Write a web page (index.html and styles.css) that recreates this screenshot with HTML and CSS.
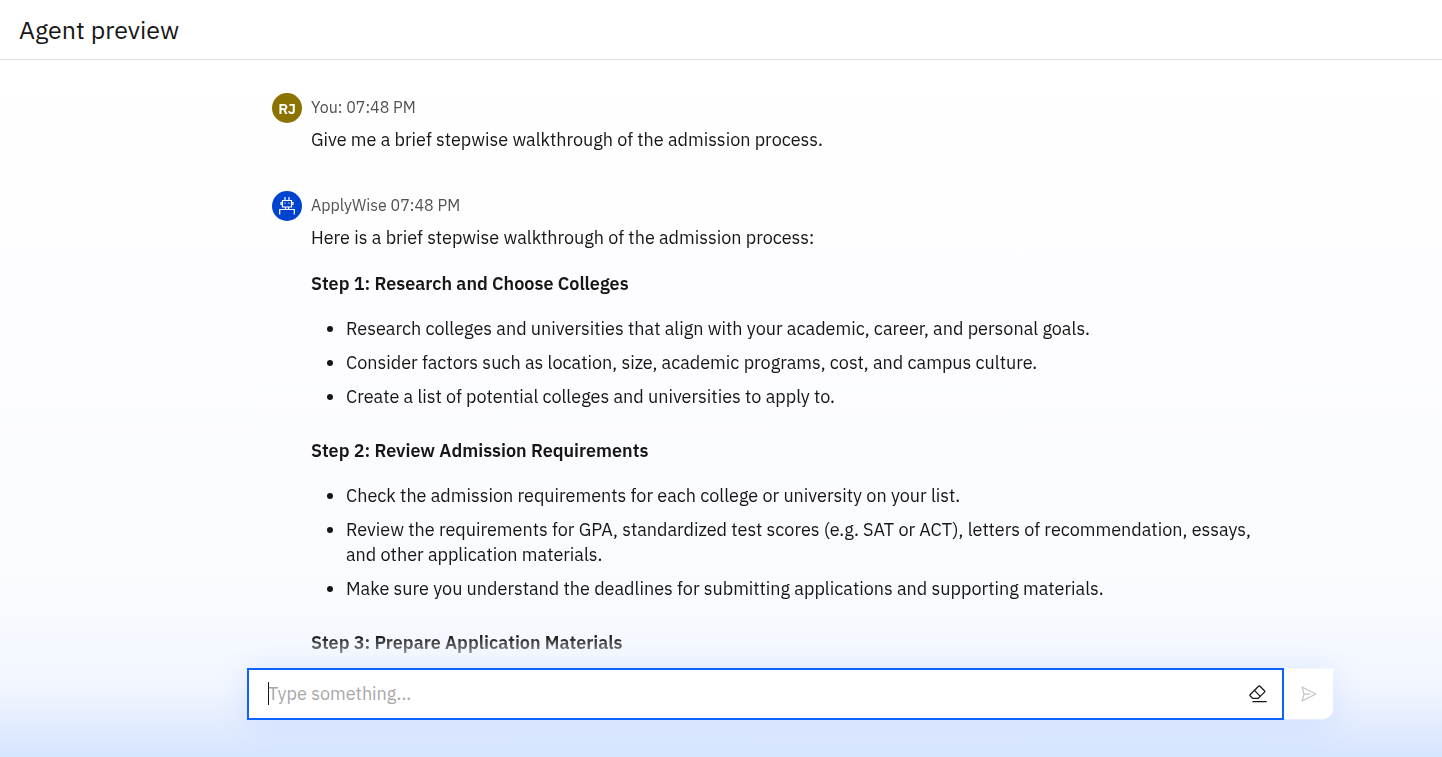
FILE: index.html
```html
<!DOCTYPE html>
<html lang="en">
<head>
<meta charset="utf-8">
<meta name="viewport" content="width=device-width, initial-scale=1">
<title>Agent preview</title>
<link rel="stylesheet" href="styles.css">
</head>
<body>
<header class="header"><h1 class="title">Agent preview</h1></header>
<main class="chat">
  <div class="messages">
    <article class="message">
      <div class="avatar avatar-user">RJ</div>
      <div class="body">
        <div class="meta">You: 07:48 PM</div>
        <p>Give me a brief stepwise walkthrough of the admission process.</p>
      </div>
    </article>
    <article class="message">
      <div class="avatar avatar-agent">
        <svg width="20" height="20" viewBox="0 0 20 20" fill="none" stroke="currentColor" stroke-width="1.2" aria-hidden="true">
          <path d="M8 1v3M12 1v3M5.500 4.500h9v6.500h-9zM5.500 6.500h-1.500v2h1.500M14.500 6.500h1.500v2h-1.500M8.500 11v2.500M11.500 11v2.500M2.700 18.500v-5h14.600v5"/>
          <path d="M7.500 7h1.200M11.300 7h1.200" stroke-width="1.200"/>
        </svg>
      </div>
      <div class="body">
        <div class="meta">ApplyWise 07:48 PM</div>
        <p>Here is a brief stepwise walkthrough of the admission process:</p>
        <h2>Step 1: Research and Choose Colleges</h2>
        <ul>
          <li>Research colleges and universities that align with your academic, career, and personal goals.</li>
          <li>Consider factors such as location, size, academic programs, cost, and campus culture.</li>
          <li>Create a list of potential colleges and universities to apply to.</li>
        </ul>
        <h2>Step 2: Review Admission Requirements</h2>
        <ul>
          <li>Check the admission requirements for each college or university on your list.</li>
          <li>Review the requirements for GPA, standardized test scores (e.g. SAT or ACT), letters of recommendation, essays, and other application materials.</li>
          <li>Make sure you understand the deadlines for submitting applications and supporting materials.</li>
        </ul>
        <h2>Step 3: Prepare Application Materials</h2>
      </div>
    </article>
  </div>
  <form class="composer">
    <div class="field">
      <input class="input" type="text" placeholder="Type something..." aria-label="Message" autocomplete="off" autofocus>
      <span class="caret" aria-hidden="true"></span>
      <button class="icon-button" type="button" aria-label="Clear conversation">
        <svg width="20" height="20" viewBox="0 0 32 32" fill="currentColor" aria-hidden="true">
          <path d="M7 27h23v2H7zM27.380 10.510 19.450 2.590a2 2 0 0 0-2.830 0l-14 14a2 2 0 0 0 0 2.830L7.130 24h9.590l10.660-10.660a2 2 0 0 0 0-2.830zM15.890 22H8l-4-4 6.310-6.310 7.930 7.920zm3.760-3.760-7.920-7.930L18 4l8 7.930z"/>
        </svg>
      </button>
    </div>
    <button class="send" type="submit" aria-label="Send" disabled>
      <svg width="20" height="20" viewBox="0 0 32 32" fill="currentColor" aria-hidden="true">
        <path d="m27.450 15.110-22-11a1 1 0 0 0-1.080.120 1 1 0 0 0-.330 1L7 16 4 26.740A1 1 0 0 0 5 28a1 1 0 0 0 .450-.110l22-11a1 1 0 0 0 0-1.780zm-20.900 10L8.760 17H18v-2H8.760L6.550 6.890 24.760 16z"/>
      </svg>
    </button>
  </form>
</main>
</body>
</html>
```

FILE: styles.css
```css
* { box-sizing: border-box; }

body {
  margin: 0;
  height: 100vh;
  display: flex;
  flex-direction: column;
  overflow: hidden;
  color: #161616;
  font: 18px/25px "IBM Plex Sans", "Noto Sans", sans-serif;
  background: linear-gradient(#ffffff 8%, #fafbff 76%, #f7fbff 81%, #f1f5ff 91%, #d6e4ff 100%);
}

.header {
  flex: none;
  padding: 14px 19px;
  border-bottom: 1px solid #e0e0e0;
  background: #ffffff;
}

.title {
  margin: 0;
  font-size: 25px;
  font-weight: 400;
  line-height: 31px;
}

.chat {
  flex: 1;
  min-height: 0;
  display: flex;
  flex-direction: column;
  padding: 0 109px 37px 247px;
}

.messages {
  flex: 1;
  min-height: 0;
  overflow: hidden;
  display: flex;
  flex-direction: column;
  gap: 39px;
  padding: 33px 72px 0 25px;
  mask-image: linear-gradient(to bottom, #000 calc(100% - 32px), transparent);
}

.message {
  display: flex;
  gap: 9px;
}

.avatar {
  flex: none;
  width: 30px;
  height: 30px;
  border-radius: 50%;
  display: flex;
  align-items: center;
  justify-content: center;
  color: #ffffff;
  font-size: 15px;
  font-weight: 600;
}

.avatar-user { background: #8a7300; }
.avatar-agent { background: #0043ce; }

.body {
  flex: 1;
  min-width: 0;
}

.meta {
  height: 34px;
  color: #525252;
  font-size: 16px;
  line-height: 29px;
}

.body p { margin: 0 0 21px; }

.message:first-child p { margin: 0; }

.body h2 {
  margin: 0 0 20px;
  font-size: 18px;
  font-weight: 600;
}

.body ul {
  margin: 0 0 29px;
  padding-left: 35px;
  display: flex;
  flex-direction: column;
  gap: 9px;
}

.composer {
  flex: none;
  display: flex;
  align-items: center;
  box-shadow: 0 4px 32px rgba(69, 137, 255, 0.14);
  border-radius: 0 0 12px 12px;
}

.field {
  position: relative;
  flex: 1;
  display: flex;
  align-items: center;
  height: 52px;
  padding: 0 14px 0 19px;
  border: 2px solid #0f62fe;
  background: #ffffff;
}

.input {
  flex: 1;
  min-width: 0;
  padding: 0 0 2px;
  border: 0;
  outline: 0;
  background: transparent;
  color: #161616;
  caret-color: transparent;
  font: inherit;
}

.input::placeholder {
  color: #a8a8a8;
  opacity: 1;
}

.caret {
  position: absolute;
  left: 19px;
  top: 12px;
  width: 1px;
  height: 23px;
  background: #161616;
}

.icon-button,
.send {
  display: flex;
  align-items: center;
  justify-content: center;
  padding: 0;
  border: 0;
  background: #ffffff;
  color: #161616;
}

.send {
  width: 49px;
  height: 50px;
  border-radius: 0 0 10px 0;
  color: #c6c6c6;
}
```
